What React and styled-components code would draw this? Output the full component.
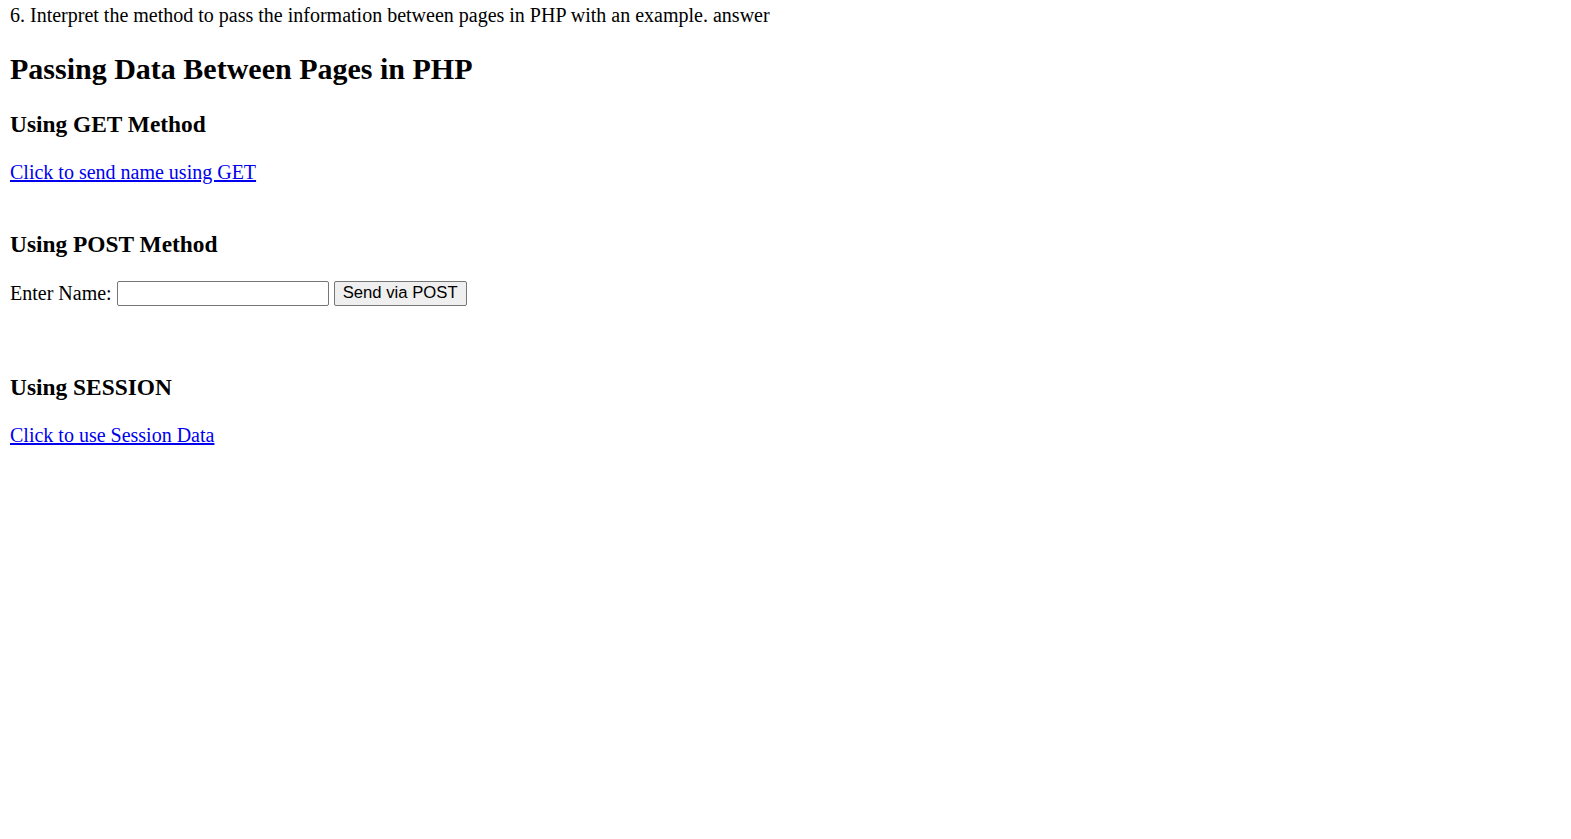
import React from "react";
import styled, { createGlobalStyle } from "styled-components";

const GlobalStyle = createGlobalStyle`
  html, body {
    margin: 0;
    background: #ffffff;
  }
  body {
    font-family: "Liberation Serif", "Times New Roman", serif;
    font-size: 20px;
    color: #000000;
  }
`;

const Page = styled.div`
  padding: 4px 10px 0 10px;
`;

const Intro = styled.div`
  line-height: 23px;
`;

const Title = styled.h2`
  font-size: 30px;
  line-height: 34.5px;
  font-weight: bold;
  margin: 24.5px 0;
`;

const SectionHeading = styled.h3`
  font-size: 23.4px;
  line-height: 27px;
  font-weight: bold;
  margin: 23.4px 0;
`;

const Line = styled.div`
  line-height: 23px;
  padding-bottom: ${(p) => p.$after || 0}px;
`;

const TextLink = styled.a`
  color: #0000ee;
  text-decoration: underline;
  cursor: pointer;
`;

const NameForm = styled.form`
  display: flex;
  align-items: center;
  gap: 5px;
  height: 25px;
  margin: -1px 0 0 0;
  padding-bottom: 45px;
`;

const Label = styled.label`
  line-height: 23px;
`;

const TextInput = styled.input`
  box-sizing: border-box;
  width: 212px;
  height: 25px;
  margin: 0;
  border: 1px solid #767676;
  border-radius: 2px;
  background: #ffffff;
  padding: 1px 2px;
  font-size: 16.7px;
  font-family: "Liberation Sans", Arial, sans-serif;
`;

const SubmitButton = styled.button`
  box-sizing: border-box;
  width: 133px;
  height: 25px;
  margin: 0;
  border: 1px solid #767676;
  border-radius: 2px;
  background: #efefef;
  color: #000000;
  font-family: "Liberation Sans", Arial, sans-serif;
  font-size: 16.7px;
  padding: 1px 8px;
`;

export default function App() {
  return (
    <Page>
      <GlobalStyle />
      <Intro>
        6. Interpret the method to pass the information between pages in PHP with an example. answer
      </Intro>

      <Title>Passing Data Between Pages in PHP</Title>

      <SectionHeading>Using GET Method</SectionHeading>
      <Line $after={24}>
        <TextLink href="#get">Click to send name using GET</TextLink>
      </Line>

      <SectionHeading>Using POST Method</SectionHeading>
      <NameForm onSubmit={(e) => e.preventDefault()}>
        <Label htmlFor="name">Enter Name:</Label>
        <TextInput id="name" type="text" />
        <SubmitButton type="submit">Send via POST</SubmitButton>
      </NameForm>

      <SectionHeading>Using SESSION</SectionHeading>
      <Line>
        <TextLink href="#session">Click to use Session Data</TextLink>
      </Line>
    </Page>
  );
}
